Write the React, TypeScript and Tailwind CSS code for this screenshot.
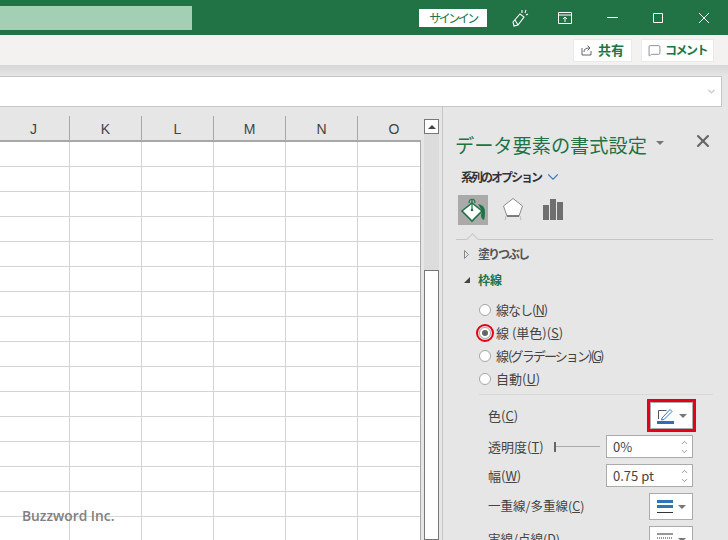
import { ChevronDown, ChevronUp, X, MessageSquare } from "lucide-react";

const font = "font-['Noto_Sans_CJK_JP','Liberation_Sans',sans-serif]";
const columns = ["K", "L", "M", "N", "O"];
const rows = Array.from({ length: 16 });

function Radio({ checked, label, hotkey, tight }: { checked?: boolean; label: string; hotkey: string; tight?: string }) {
  return (
    <div className="flex h-[23px] items-center gap-[5px] pl-[23px] text-[13px] text-[#444]">
      <span className="relative flex h-[12px] w-[12px] items-center justify-center rounded-full border border-[#a6a6a6] bg-white">
        {checked && <span className="h-[6px] w-[6px] rounded-full bg-[#666]" />}
        {checked && <span className="absolute -inset-[4px] rounded-full border-2 border-[#e60012]" />}
      </span>
      <span className={tight}>
        {label}(<u>{hotkey}</u>)
      </span>
    </div>
  );
}

function Spin({ value }: { value: string }) {
  return (
    <div className="flex h-[23px] w-[87px] items-center justify-between border border-[#ababab] bg-white pl-[6px] pr-[3px] text-[13px] text-[#444]">
      <span>{value}</span>
      <span className="flex flex-col text-[#777]">
        <ChevronUp size={9} />
        <ChevronDown size={9} />
      </span>
    </div>
  );
}

function Caret() {
  return <span className="h-0 w-0 border-x-[4px] border-t-[4px] border-x-transparent border-t-[#777]" />;
}

export default function App() {
  return (
    <div className={`flex h-[540px] w-[728px] flex-col overflow-hidden bg-[#e6e6e6] ${font}`}>
      {/* Title bar */}
      <div className="flex h-[35px] shrink-0 items-center bg-[#217346]">
        <div className="h-[24px] w-[192px] bg-[#a3cfb5]" />
        <div className="ml-[227px] flex h-[18px] w-[68px] items-center justify-center bg-white text-[12px] tracking-[-2.5px] text-[#217346]">
          サインイン
        </div>
        <svg className="ml-[23px] h-[20px] w-[20px] text-white" viewBox="0 0 20 20" fill="none" stroke="currentColor" strokeWidth="1.1">
          <path d="M3 14 L10 6 L14 9 L8 17 L4 18 Z M8 17 L5 12 M12 2 L12 5 M16 2 L15 5 M18 6 L16 7" />
        </svg>
        <svg className="ml-[28px] h-[14px] w-[14px] text-white" viewBox="0 0 14 14" fill="none" stroke="currentColor">
          <path d="M.5 1.5h13v11H.5z M.5 4h13 M7 11V6 M5 8l2-2 2 2" />
        </svg>
        <svg className="ml-[35px] h-[11px] w-[11px] text-white" viewBox="0 0 11 11" fill="none" stroke="currentColor">
          <path d="M0 5.500h11" />
        </svg>
        <svg className="ml-[35px] h-[10px] w-[10px] text-white" viewBox="0 0 10 10" fill="none" stroke="currentColor">
          <path d="M.5.5h9v9h-9z" />
        </svg>
        <svg className="ml-[36px] h-[10px] w-[10px] text-white" viewBox="0 0 10 10" fill="none" stroke="currentColor">
          <path d="M0 0l10 10M10 0L0 10" />
        </svg>
      </div>

      {/* Ribbon strip */}
      <div className="flex h-[30px] shrink-0 items-center justify-end gap-[9px] bg-[#f3f2f1] pr-[14px]">
        <div className="flex h-[23px] w-[59px] items-center justify-center gap-[5px] border border-[#eaeaea] bg-white text-[13px] font-bold text-[#217346]">
          <svg className="h-[12px] w-[12px] text-[#555]" viewBox="0 0 12 12" fill="none" stroke="currentColor" strokeWidth="0.9">
            <path d="M1 4v7h9V7 M3 8c0-3 2-4 5-4 M6.500 1.500 9 4 6.500 6.500" />
          </svg>
          共有
        </div>
        <div className="flex h-[23px] w-[73px] items-center justify-center gap-[4px] border border-[#eaeaea] bg-white text-[12px] font-bold tracking-[-1.5px] text-[#217346]">
          <MessageSquare size={13} strokeWidth={1.2} className="text-[#555]" />
          コメント
        </div>
      </div>

      {/* Formula bar */}
      <div className="h-[11px] shrink-0 bg-gradient-to-b from-[#d6d6d6] to-[#e6e6e6]" />
      <div className="mr-[6px] flex h-[31px] shrink-0 items-center justify-end border-y border-r border-[#c6c6c6] bg-white pr-[4px]">
        <ChevronDown size={11} strokeWidth={3} className="text-[#c6c6c6]" />
      </div>

      <div className="flex min-h-0 flex-1">
        {/* Sheet */}
        <div className="w-[421px] shrink-0 overflow-hidden">
          <div className="flex h-[35px] items-end border-b-2 border-[#a8a8a8]">
            <div className="h-[24px] w-[70px] shrink-0 border-r border-[#a8a8a8] pt-px text-center font-['Liberation_Sans'] text-[14px] leading-[24px] text-[#444]">
              <span className="ml-[-2px]">J</span>
            </div>
            {columns.map((c) => (
              <div key={c} className="h-[24px] w-[72px] shrink-0 border-r border-[#a8a8a8] pt-px text-center font-['Liberation_Sans'] text-[14px] leading-[24px] text-[#444] last:border-r-0">
                {c}
              </div>
            ))}
          </div>
          <div className="relative border-r border-[#a8a8a8] bg-white">
            {rows.map((_, i) => (
              <div key={i} className="flex h-[25px] border-b border-[#d4d4d4]">
                <div className="w-[70px] shrink-0 border-r border-[#d4d4d4]" />
                {columns.map((c) => (
                  <div key={c} className="w-[72px] shrink-0 border-r border-[#d4d4d4] last:border-r-0" />
                ))}
              </div>
            ))}
            <span className="absolute left-[22px] top-[364px] font-['Open_Sans'] text-[13.8px] font-semibold text-[#808080]">
              Buzzword Inc.
            </span>
          </div>
        </div>

        {/* Scroll bar */}
        <div className="flex w-[22px] shrink-0 flex-col items-center border-r border-[#c6c6c6] pt-[12px]">
          <div className="flex h-[15px] w-[15px] shrink-0 items-center justify-center border border-[#777] bg-white">
            <span className="h-0 w-0 border-x-[4px] border-b-[4px] border-x-transparent border-b-[#444]" />
          </div>
          <div className="h-[136px] w-[15px] shrink-0 bg-[#dcdcdc]" />
          <div className="w-[15px] flex-1 border border-[#777] bg-white" />
        </div>

        {/* Format pane */}
        <div className="min-w-0 flex-1 pl-[13px] pr-[15px] text-[#444]">
          <div className="flex h-[52px] items-end">
            <span className="ml-[-1px] text-[19.2px] leading-[28px] text-[#217346]">データ要素の書式設定</span>
            <span className="mb-[14px] ml-[9px] flex"><Caret /></span>
            <X className="mb-[8px] ml-auto text-[#666]" size={20} strokeWidth={2.5} />
          </div>
          <div className="mt-[9px] flex h-[18px] items-center gap-[3px] pl-[5px] text-[12px] font-bold tracking-[-2px] text-[#333]">
            系列のオプション
            <ChevronDown size={18} className="text-[#3b82c4]" strokeWidth={1.5} />
          </div>
          <div className="mt-[9px] flex h-[30px] items-center pl-[2px]">
            <div className="flex h-[30px] w-[30px] items-center justify-center bg-[#a9aaa9]">
              <svg className="h-[26px] w-[26px]" viewBox="0 0 26 26">
                <path d="M12 6 L22 14 L12 24 L2 14 Z" fill="#fff" stroke="#217346" strokeWidth="1.6" />
                <path d="M9 6 C9 1 15 1 15 6 M12 3v9" stroke="#217346" strokeWidth="1.2" fill="none" />
                <circle cx="12" cy="13" r="1.3" fill="#217346" />
                <path d="M18 7 q7 1 7 8 q0 5-1 8 q-3-1-3-5 l1-4z" fill="#217346" />
              </svg>
            </div>
            <svg className="ml-[10px] h-[30px] w-[30px]" viewBox="0 0 30 30">
              <path d="M15 3.500 L24.500 11 L21 21 H9 L5.500 11 Z" fill="#fff" stroke="#8a8a8a" />
              <path d="M9 21 H21" stroke="#666" strokeWidth="1.5" />
              <path d="M8 21 L7 25 M22 21 L23 25" stroke="#bbb" fill="none" />
            </svg>
            <svg className="ml-[15px] h-[22px] w-[20px]" viewBox="0 0 20 22" fill="#6f6f6f">
              <path d="M0 6h6v15H0z M7 0h6v21H7z M14 3h6v18h-6z" />
            </svg>
          </div>
          <div className="relative mt-[14px] border-t border-[#c6c6c6]">
            <span className="absolute left-[12px] top-[-5px] h-[9px] w-[9px] rotate-45 border-l border-t border-[#c6c6c6] bg-[#e6e6e6]" />
          </div>
          <div className="mt-[2px] flex h-[24px] items-center gap-[9px] pl-[8px] text-[12px] font-bold tracking-[-2px] text-[#555]">
            <svg className="h-[9px] w-[5px]" viewBox="0 0 5 9" fill="none" stroke="#888">
              <path d="M.5.5v8l4-4z" />
            </svg>
            塗りつぶし
          </div>
          <div className="mt-[2px] flex h-[24px] items-center gap-[8px] pl-[8px] text-[12px] font-bold text-[#217346]">
            <span className="h-0 w-0 border-b-[6px] border-l-[6px] border-b-[#444] border-l-transparent" />
            枠線
          </div>
          <div className="mt-[6px]">
            <Radio label="線なし" hotkey="N" tight="tracking-[-1px]" />
            <Radio checked label="線 (単色)" hotkey="S" />
            <Radio label="線 (グラデーション)" hotkey="G" tight="tracking-[-1.9px]" />
            <Radio label="自動" hotkey="U" />
          </div>
          <div className="ml-[23px] mt-[4px] border-t border-[#d8d8d8]" />
          <div className="mt-[7px] flex h-[27px] items-center justify-between pl-[32px] pr-[20px] text-[13px]">
            <span>色(<u>C</u>)</span>
            <div className="relative flex h-[27px] w-[43px] items-center justify-center gap-[5px] border border-[#ababab] bg-white">
              <span className="absolute -inset-[4px] border-[3px] border-[#e60012]" />
              <svg className="h-[17px] w-[17px]" viewBox="0 0 17 17" fill="none">
                <path d="M1.500 12V3.500h8" stroke="#555" />
                <path d="M5 11 L13 2.500 L15 4.500 L7 12.500 L4.500 13 Z" stroke="#2b7cd3" fill="#fff" />
                <path d="M0 14h17v3H0z" fill="#2f6eb5" />
              </svg>
              <Caret />
            </div>
          </div>
          <div className="mt-[6px] flex h-[23px] items-center pl-[32px] pr-[20px] text-[13px]">
            <span>透明度(<u>T</u>)</span>
            <span className="ml-[10px] h-[10px] w-[2px] bg-[#666]" />
            <span className="mr-[6px] h-px flex-1 bg-[#aaa]" />
            <Spin value="0%" />
          </div>
          <div className="mt-[6px] flex h-[23px] items-center justify-between pl-[32px] pr-[20px] text-[13px]">
            <span>幅(<u>W</u>)</span>
            <Spin value="0.75 pt" />
          </div>
          <div className="mt-[6px] flex h-[27px] items-center justify-between pl-[32px] pr-[20px] text-[12.5px]">
            <span>一重線/多重線(<u>C</u>)</span>
            <div className="flex h-[27px] w-[44px] items-center justify-center gap-[5px] border border-[#ababab] bg-white">
              <svg className="h-[14px] w-[16px]" viewBox="0 0 16 14">
                <path d="M0 0h16v3H0z M0 5h16v3H0z" fill="#2e75b6" />
                <path d="M0 12h16v1H0z" fill="#333" />
              </svg>
              <Caret />
            </div>
          </div>
          <div className="mt-[6px] flex h-[27px] items-center justify-between pl-[32px] pr-[20px] text-[12.5px]">
            <span>実線/点線(<u>D</u>)</span>
            <div className="flex h-[27px] w-[44px] items-center justify-center gap-[5px] border border-[#ababab] bg-white">
              <svg className="h-[14px] w-[16px]" viewBox="0 0 16 14">
                <path d="M0 1h16" stroke="#333" />
                <path d="M0 5h16" stroke="#333" strokeDasharray="1 1" />
              </svg>
              <Caret />
            </div>
          </div>
        </div>
      </div>
    </div>
  );
}
